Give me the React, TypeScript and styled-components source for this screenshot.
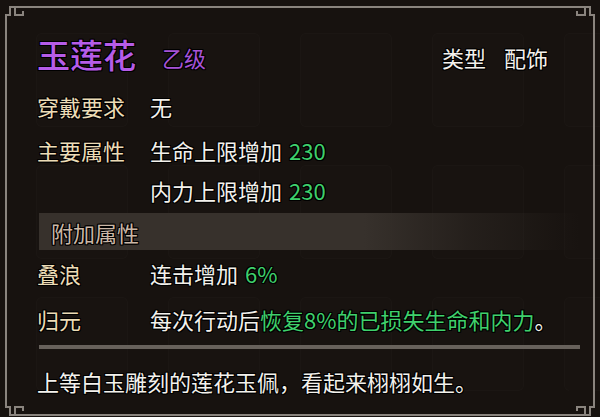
import styled, { createGlobalStyle } from "styled-components";

/*--------------------------
    Global
--------------------------*/
const GlobalReset = createGlobalStyle`
    html, body {
        margin: 0;
        padding: 0;
        background: #17120f;
    }
    * {
        box-sizing: border-box;
    }
`;

const Colors = {
    Bg: "#17120f",
    Frame: "#8a847e",
    Purple: "#b65ce8",
    PurpleSoft: "#a653d6",
    Label: "#ecdcb6",
    Value: "#f3f1ec",
    Green: "#3fd06c",
    BandText: "#cbb7a6",
    BandBg: "#37312c",
    Divider: "#67615b",
};

const outline = `
    text-shadow: 1px 1px 0 #000, -1px -1px 0 #000, 1px -1px 0 #000, -1px 1px 0 #000,
        0 1px 0 #000, 0 -1px 0 #000, 1px 0 0 #000, -1px 0 0 #000;
`;

/*--------------------------
    Styled
--------------------------*/
const Panel = styled.div`
    position: relative;
    width: 600px;
    height: 417px;
    overflow: hidden;
    background-color: ${Colors.Bg};
    font-family: "Noto Sans CJK SC", "Noto Sans", sans-serif;
`;

const TileLayer = styled.div`
    position: absolute;
    left: 36px;
    top: 33px;
    display: grid;
    grid-template-columns: repeat(5, 92px);
    grid-auto-rows: 94px;
    gap: 38px 40px;
`;

const Tile = styled.div`
    border: 1px solid rgba(255, 255, 255, 0.014);
    border-radius: 6px;
    background-color: rgba(255, 255, 255, 0.006);
`;

const Frame = styled.div`
    position: absolute;
    left: 5px;
    top: 6px;
    right: 5px;
    bottom: 1px;
    border: 2px solid ${Colors.Frame};
    pointer-events: none;
`;

const Corner = styled.svg<{ $pos: "tl" | "tr" | "bl" | "br" }>`
    position: absolute;
    width: 26px;
    height: 26px;
    background-color: ${Colors.Bg};
    ${(p) => (p.$pos[0] === "t" ? "top: -2px;" : "bottom: -2px;")}
    ${(p) => (p.$pos[1] === "l" ? "left: -2px;" : "right: -2px;")}
    transform: ${(p) =>
        p.$pos === "tl"
            ? "none"
            : p.$pos === "tr"
            ? "scaleX(-1)"
            : p.$pos === "bl"
            ? "scaleY(-1)"
            : "scale(-1, -1)"};
`;

const Content = styled.div`
    position: relative;
    display: flex;
    flex-direction: column;
    padding: 34px 20px 0 37px;
`;

const TitleRow = styled.div`
    display: flex;
    align-items: center;
    height: 40px;
`;

const ItemName = styled.div`
    color: ${Colors.Purple};
    font-size: 33px;
    font-weight: 500;
    line-height: 40px;
    ${outline}
`;

const Grade = styled.div`
    margin: 6px 0 0 26px;
    color: ${Colors.PurpleSoft};
    font-size: 22px;
    ${outline}
`;

const TypeGroup = styled.div`
    display: flex;
    gap: 18px;
    margin: 6px 32px 0 auto;
    color: ${Colors.Value};
    font-size: 22px;
    ${outline}
`;

const Row = styled.div<{ $top?: number }>`
    display: grid;
    grid-template-columns: 113px 1fr;
    align-items: center;
    height: 40px;
    margin-top: ${(p) => p.$top ?? 0}px;
    font-size: 22px;
    line-height: 40px;
`;

const Label = styled.div`
    color: ${Colors.Label};
    ${outline}
`;

const Value = styled.div`
    color: ${Colors.Value};
    white-space: nowrap;
    ${outline}
`;

const Num = styled.span<{ $gap?: boolean }>`
    margin-left: ${(p) => (p.$gap ? "7px" : "0")};
    color: ${Colors.Green};
`;

const Band = styled.div`
    display: flex;
    align-items: center;
    height: 37px;
    margin: 3px 0 0 2px;
    padding: 0 0 0 12px;
    color: ${Colors.BandText};
    font-size: 22px;
    background: linear-gradient(
        to right,
        ${Colors.BandBg} 0%,
        ${Colors.BandBg} 60%,
        rgba(55, 49, 44, 0.4) 80%,
        rgba(55, 49, 44, 0) 100%
    );
    ${outline}
`;

const Divider = styled.div`
    height: 4px;
    margin: 6px 0 0 2px;
    background-color: ${Colors.Divider};
`;

const Desc = styled.div`
    height: 40px;
    margin-top: 12px;
    color: ${Colors.Value};
    font-size: 22px;
    line-height: 40px;
    white-space: nowrap;
    ${outline}
`;

/*--------------------------
    Parts
--------------------------*/
const FrameCorner = ({ pos }: { pos: "tl" | "tr" | "bl" | "br" }) => (
    <Corner $pos={pos} viewBox="0 0 26 26">
        <path
            d="M1 26 V9 H5 V1 H26 M10 1 V9 H18 V5"
            fill="none"
            stroke={Colors.Frame}
            strokeWidth={2}
        />
    </Corner>
);

/*--------------------------
    Main
--------------------------*/
const App = () => {
    return (
        <>
            <GlobalReset />
            <Panel>
                <TileLayer>
                    {Array.from({ length: 15 }).map((_, i) => (
                        <Tile key={i} />
                    ))}
                </TileLayer>

                <Frame>
                    <FrameCorner pos="tl" />
                    <FrameCorner pos="tr" />
                    <FrameCorner pos="bl" />
                    <FrameCorner pos="br" />
                </Frame>

                <Content>
                    <TitleRow>
                        <ItemName>玉莲花</ItemName>
                        <Grade>乙级</Grade>
                        <TypeGroup>
                            <span>类型</span>
                            <span>配饰</span>
                        </TypeGroup>
                    </TitleRow>

                    <Row $top={12}>
                        <Label>穿戴要求</Label>
                        <Value>无</Value>
                    </Row>

                    <Row $top={4}>
                        <Label>主要属性</Label>
                        <Value>
                            生命上限增加<Num $gap>230</Num>
                        </Value>
                    </Row>

                    <Row>
                        <Label />
                        <Value>
                            内力上限增加<Num $gap>230</Num>
                        </Value>
                    </Row>

                    <Band>附加属性</Band>

                    <Row $top={3}>
                        <Label>叠浪</Label>
                        <Value>
                            连击增加<Num $gap>6%</Num>
                        </Value>
                    </Row>

                    <Row $top={6}>
                        <Label>归元</Label>
                        <Value>
                            每次行动后<Num>恢复8%的已损失生命和内力</Num>。
                        </Value>
                    </Row>

                    <Divider />

                    <Desc>上等白玉雕刻的莲花玉佩，看起来栩栩如生。</Desc>
                </Content>
            </Panel>
        </>
    );
};

export default App;
